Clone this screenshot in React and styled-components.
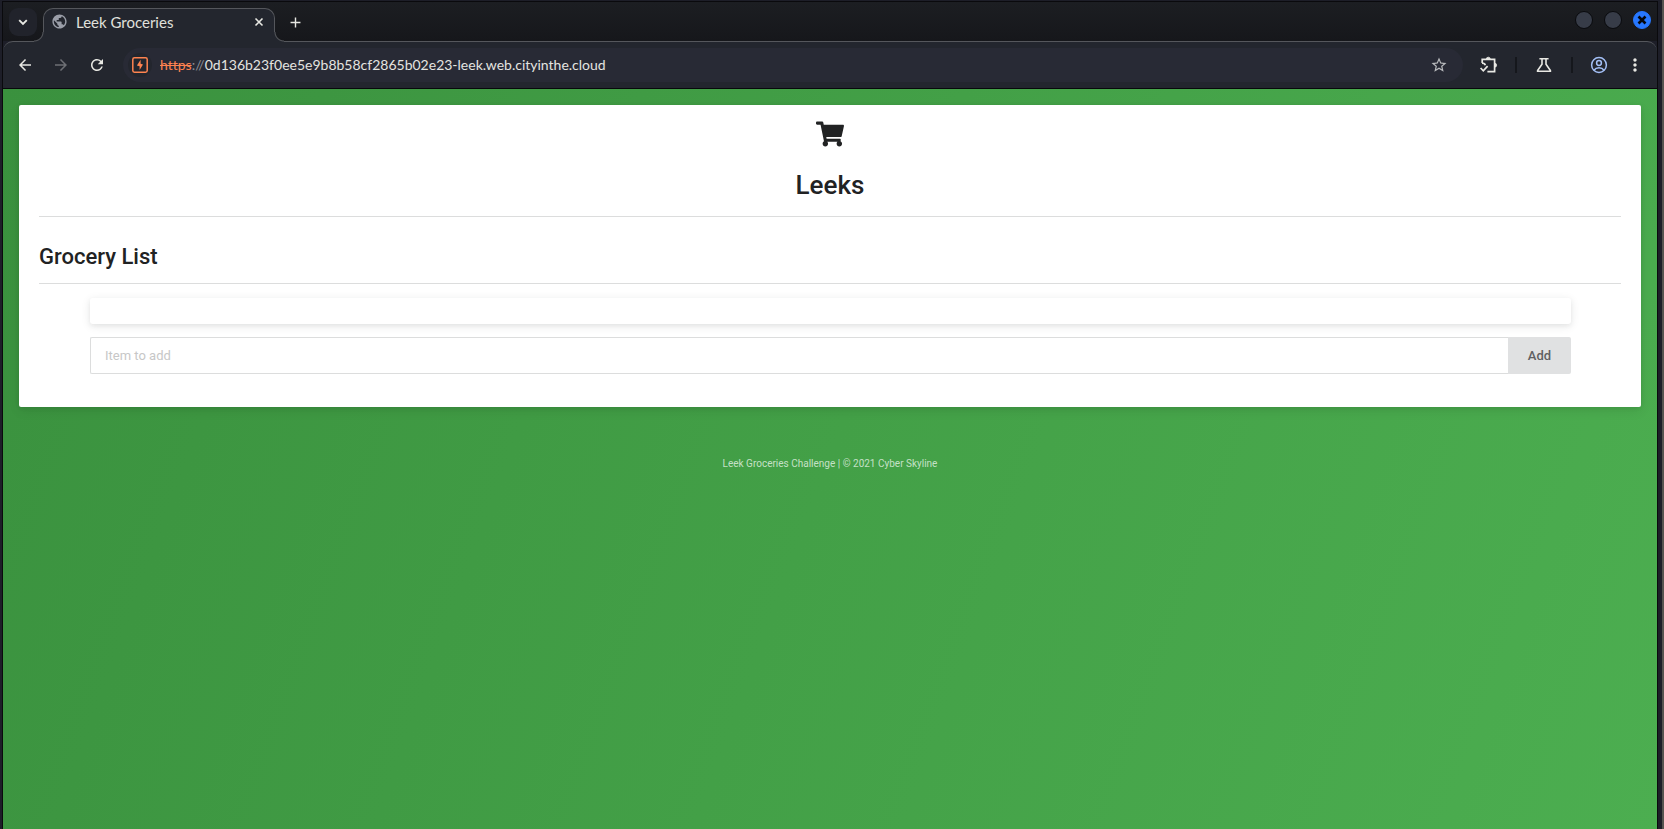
import React from "react";
import styled, { createGlobalStyle, css } from "styled-components";
import {
  MdArrowBack,
  MdArrowForward,
  MdRefresh,
  MdStarBorder,
  MdMoreVert,
  MdPublic,
  MdAdd,
} from "react-icons/md";
import { FaShoppingCart } from "react-icons/fa";

const color = {
  frame: "#1d1e28",
  toolbar: "#23262e",
  omnibox: "#282a35",
  line: "#55575c",
  icon: "#e8e8e3",
  orange: "#ff8350",
};

const GlobalStyle = createGlobalStyle`
  * { box-sizing: border-box; }
  html, body { margin: 0; background: ${color.frame}; }
  button { font: inherit; border: 0; padding: 0; cursor: pointer; }
`;

const Desktop = styled.div`
  display: flex;
  min-height: 100vh;
  border-right: 2px solid #55534f;
  font-family: Lato, "Noto Sans", sans-serif;
  font-variant-ligatures: none;
`;

const Window = styled.div`
  flex: 1;
  min-width: 0;
  display: flex;
  flex-direction: column;
  margin: 1px 4px 0 2px;
  border: 1px solid #0a0a0d;
  border-bottom: 0;
`;

const TabStrip = styled.header`
  display: flex;
  align-items: flex-start;
  height: 39px;
  padding: 6px 6px 0;
  background: linear-gradient(#1c1e22, #16171b);
`;

const iconButton = css`
  display: flex;
  flex: none;
  align-items: center;
  justify-content: center;
  color: ${color.icon};
  background: transparent;
`;

const TabSearch = styled.button`
  ${iconButton}
  width: 28px;
  height: 28px;
  border-radius: 9px;
  background: #21232b;
`;

const flare = css`
  content: "";
  position: absolute;
  bottom: 0;
  width: 10px;
  height: 10px;
`;

const Tab = styled.div`
  position: relative;
  display: flex;
  align-items: center;
  gap: 8px;
  width: 232px;
  height: 34px;
  margin-left: 6px;
  padding: 0 7px 8px 7px;
  border: 1px solid ${color.line};
  border-bottom: 0;
  border-radius: 10px 10px 0 0;
  background: ${color.toolbar};
  color: #e0e0dc;
  font-size: 15px;
  line-height: 20px;

  &::before {
    ${flare}
    left: -10px;
    background: radial-gradient(circle at 0 0, transparent 8px, ${color.line} 9px, ${color.toolbar} 10px);
  }

  &::after {
    ${flare}
    right: -10px;
    background: radial-gradient(circle at 100% 0, transparent 8px, ${color.line} 9px, ${color.toolbar} 10px);
  }
`;

const TabTitle = styled.span`
  flex: 1;
`;

const TabAction = styled.button`
  ${iconButton}
  width: 16px;
  height: 16px;
`;

const NewTab = styled.button`
  ${iconButton}
  width: 28px;
  height: 28px;
  margin-left: 6px;
`;

const WindowControls = styled.div`
  display: flex;
  gap: 11px;
  margin: 3px 0 0 auto;
`;

const WindowButton = styled.button`
  ${iconButton}
  width: 18px;
  height: 18px;
  border: 1px solid ${(p) => (p.$close ? "#2777ff" : "#090a0d")};
  border-radius: 50%;
  background: ${(p) => (p.$close ? "#2777ff" : "#373c48")};
  color: #05070c;
`;

const Toolbar = styled.nav`
  display: flex;
  align-items: center;
  height: 48px;
  padding: 0 12px 0 10px;
  border-top: 1px solid ${color.line};
  border-bottom: 1px solid #08080b;
  border-radius: 10px 10px 0 0;
  background: ${color.toolbar};
`;

/* Merges the foot of the active tab into the toolbar. */
const TabJoin = styled.div`
  width: 230px;
  height: 1px;
  margin: 0 0 -1px 41px;
  background: ${color.toolbar};
  position: relative;
  z-index: 1;
`;

const NavButton = styled.button`
  ${iconButton}
  width: 24px;
  height: 24px;
  margin-right: 12px;
  color: ${(p) => (p.$dim ? "#6d6f74" : color.icon)};
`;

const Omnibox = styled.div`
  flex: 1;
  min-width: 0;
  display: flex;
  align-items: center;
  height: 34px;
  margin-left: 2px;
  padding: 0 12px 0 5px;
  border-radius: 17px;
  background: ${color.omnibox};
`;

const SiteInfo = styled.button`
  ${iconButton}
  width: 24px;
  height: 24px;
  border-radius: 50%;
  background: ${color.toolbar};
`;

const Address = styled.div`
  flex: 1;
  padding-left: 8px;
  color: #e4e4e0;
  font-size: 14px;
  line-height: 20px;
  white-space: nowrap;
`;

const Scheme = styled.s`
  color: ${color.orange};
`;

const Muted = styled.span`
  color: #8b8d94;
`;

const BarAction = styled.button`
  ${iconButton}
  width: ${(p) => p.$width || 24}px;
  height: 24px;
  color: ${(p) => p.$tone || color.icon};
`;

const Actions = styled.div`
  display: flex;
  align-items: center;
  gap: 14px;
  margin-left: 14px;
`;

const Separator = styled.span`
  width: 2px;
  height: 16px;
  background: #15171c;
`;

const Page = styled.main`
  flex: 1;
  padding: 16px;
  background: linear-gradient(110deg, #3a913e, #43a047, #4cae50);
  font-family: Roboto, sans-serif;
  color: #212223;
`;

const Card = styled.section`
  padding: 15px 20px 33px;
  border-radius: 2px;
  background: #fff;
  box-shadow: 0 1px 4px rgba(0, 0, 0, 0.08), 0 4px 12px rgba(0, 0, 0, 0.08);
`;

const CardHeader = styled.div`
  display: flex;
  flex-direction: column;
  align-items: center;
  gap: 21px;
  padding-bottom: 15px;
  border-bottom: 1px solid #dcdddd;
`;

const Title = styled.h1`
  margin: 0;
  font-size: 26px;
  line-height: 32px;
  font-weight: 500;
`;

const Subtitle = styled.h2`
  margin: 0;
  padding: 26px 0 12px;
  border-bottom: 1px solid #dcdddd;
  font-size: 22px;
  line-height: 28px;
  font-weight: 500;
`;

const Groceries = styled.div`
  padding: 14px 50px 0 51px;
`;

const Items = styled.ul`
  min-height: 26px;
  margin: 0 0 13px;
  padding: 0;
  border-radius: 3px;
  box-shadow: 0 2px 4px rgba(34, 36, 38, 0.05), 0 2px 10px rgba(34, 36, 38, 0.1);
`;

const AddForm = styled.form`
  display: flex;
  height: 37px;
  font-size: 13px;
`;

const ItemInput = styled.input`
  flex: 1;
  min-width: 0;
  padding: 0 14px;
  border: 1px solid #dcdddd;
  border-right: 0;
  border-radius: 2px 0 0 2px;
  background: #fff;
  font: inherit;
  outline: 0;

  &::placeholder {
    color: #c7c7c7;
  }
`;

const AddButton = styled.button`
  width: 63px;
  border-radius: 0 2px 2px 0;
  background: #e0e1e2;
  color: #5f6061;
  font-weight: 500;
`;

const Footer = styled.footer`
  padding: 49px 0;
  color: rgba(255, 255, 255, 0.7);
  font-size: 10px;
  line-height: 16px;
  text-align: center;
`;

const BurpIcon = () => (
  <svg width="16" height="16" viewBox="0 0 16 16" fill="none" stroke={color.orange}>
    <rect x="0.8" y="0.8" width="14.4" height="14.4" rx="1.6" strokeWidth="1.5" />
    <path d="M8.6 2.8v4l2.400 .6L7.600 13V9.200L4.900 8.600z" fill={color.orange} stroke="none" />
  </svg>
);

const ChevronIcon = () => (
  <svg width="10" height="10" viewBox="0 0 10 10" fill="none" stroke="currentColor" strokeWidth="1.9">
    <path d="M1.200 3.200L5 7l3.800-3.800" />
  </svg>
);

const ExtensionsIcon = () => (
  <svg width="20" height="20" viewBox="0 0 20 20" fill="none" stroke="currentColor" strokeWidth="1.7">
    <path d="M3.2 8V4.3h12.400V16.6H8.4" />
    <path d="M7.3 4.2a2 2 0 0 1 4 0zM15.6 8.2a2 2 0 0 1 0 4z" fill="currentColor" strokeWidth="0.8" />
    <path d="M3 8.1c1.8 0 3 .8 3.3 2.1M1.6 13l2.7 2.8 4.3-4.7" />
  </svg>
);

const FlaskIcon = () => (
  <svg width="18" height="18" viewBox="0 0 18 18" fill="none" stroke="currentColor" strokeWidth="1.6">
    <path d="M4.4 2.8h9.2M7 2.8v5.4L2.6 14.6v.6h12.8v-.6L11 8.2V2.8" />
  </svg>
);

const ProfileIcon = () => (
  <svg width="18" height="18" viewBox="0 0 18 18" fill="none" stroke="currentColor" strokeWidth="1.5">
    <circle cx="9" cy="9" r="7.4" />
    <circle cx="9" cy="7" r="2.4" />
    <path d="M4 14.2c1.2-1.7 3-2.4 5-2.4s3.8 .7 5 2.4" />
  </svg>
);

const CrossIcon = ({ weight }) => (
  <svg width="10" height="10" viewBox="0 0 10 10" stroke="currentColor" strokeWidth={weight}>
    <path d="M1.500 1.500l7 7M8.500 1.500l-7 7" />
  </svg>
);

export default function App() {
  return (
    <Desktop>
      <GlobalStyle />
      <Window>
        <TabStrip>
          <TabSearch aria-label="Search tabs">
            <ChevronIcon />
          </TabSearch>
          <Tab>
            <MdPublic size={17} color="#9a9ea8" />
            <TabTitle>Leek Groceries</TabTitle>
            <TabAction aria-label="Close tab">
              <CrossIcon weight={1.6} />
            </TabAction>
          </Tab>
          <NewTab aria-label="New tab">
            <MdAdd size={17} />
          </NewTab>
          <WindowControls>
            <WindowButton aria-label="Minimize" />
            <WindowButton aria-label="Maximize" />
            <WindowButton $close aria-label="Close window">
              <CrossIcon weight={2.6} />
            </WindowButton>
          </WindowControls>
        </TabStrip>
        <TabJoin />
        <Toolbar>
          <NavButton aria-label="Back">
            <MdArrowBack size={18} />
          </NavButton>
          <NavButton $dim aria-label="Forward">
            <MdArrowForward size={18} />
          </NavButton>
          <NavButton aria-label="Reload">
            <MdRefresh size={18} />
          </NavButton>
          <Omnibox>
            <SiteInfo aria-label="Site information">
              <BurpIcon />
            </SiteInfo>
            <Address>
              <Scheme>https</Scheme>
              <Muted>://</Muted>
              0d136b23f0ee5e9b8b58cf2865b02e23-leek.web.cityinthe.cloud
            </Address>
            <BarAction aria-label="Bookmark" $tone="#b9bbbd">
              <MdStarBorder size={18} />
            </BarAction>
          </Omnibox>
          <Actions>
            <BarAction aria-label="Extensions">
              <ExtensionsIcon />
            </BarAction>
            <Separator />
            <BarAction aria-label="Labs" $width={26}>
              <FlaskIcon />
            </BarAction>
            <Separator />
            <BarAction aria-label="Profile" $tone="#a3bff5">
              <ProfileIcon />
            </BarAction>
            <BarAction aria-label="Menu" $width={20}>
              <MdMoreVert size={20} />
            </BarAction>
          </Actions>
        </Toolbar>
        <Page>
          <Card>
            <CardHeader>
              <FaShoppingCart size={28} />
              <Title>Leeks</Title>
            </CardHeader>
            <Subtitle>Grocery List</Subtitle>
            <Groceries>
              <Items />
              <AddForm onSubmit={(e) => e.preventDefault()}>
                <ItemInput aria-label="Item to add" placeholder="Item to add" />
                <AddButton type="submit">Add</AddButton>
              </AddForm>
            </Groceries>
          </Card>
          <Footer>Leek Groceries Challenge | © 2021 Cyber Skyline</Footer>
        </Page>
      </Window>
    </Desktop>
  );
}
